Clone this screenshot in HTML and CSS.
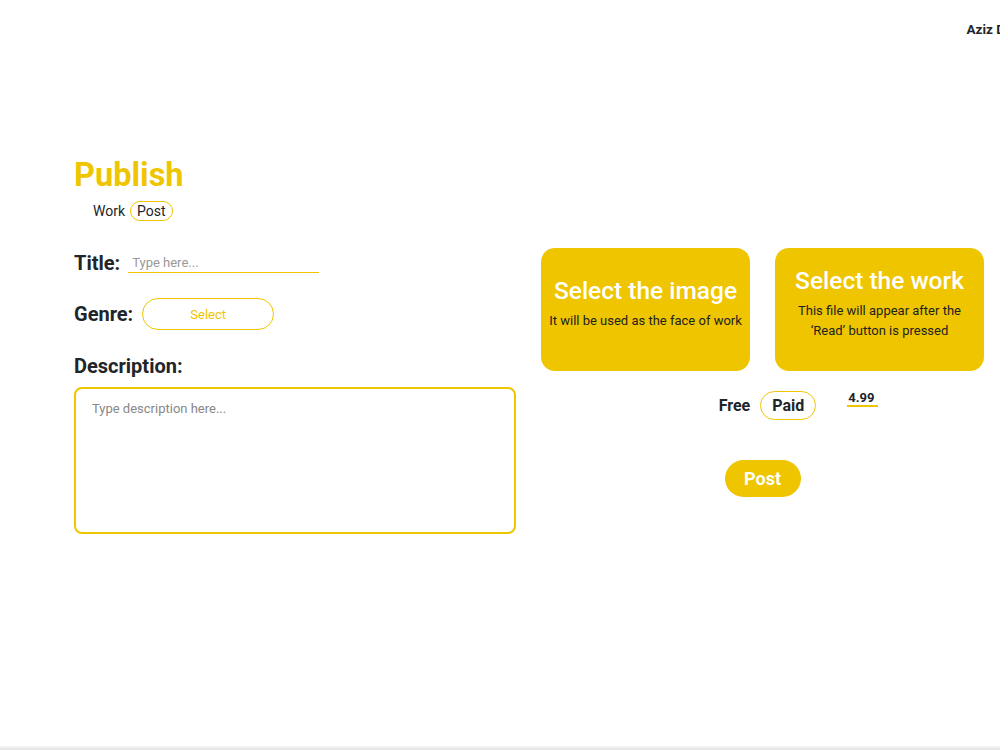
FILE: index.html
```html
<!DOCTYPE html>
<html lang="en">
<head>
  <meta charset="UTF-8" />
  <meta name="viewport" content="width=device-width, initial-scale=1.0"/>
  <title>Publish</title>
  <link rel="stylesheet" href="styles.css">
</head>
<body>
  <div class="page">
    <header class="header">
      <span class="user">Aziz Dzhumaev</span>
    </header>

    <main class="main">
      <h1 class="heading">Publish</h1>
      <div class="tabs">
        <span class="tab">Work</span>
        <span class="tab active">Post</span>
      </div>

      <div class="form-grid">
        <div class="left">
          <div class="row">
            <label class="label" for="title">Title:</label>
            <input class="title-input" id="title" type="text" placeholder="Type here..." />
          </div>
          <div class="row genre-row">
            <span class="label">Genre:</span>
            <button class="select-btn">Select</button>
          </div>
          <div class="label desc-label">Description:</div>
          <textarea class="desc" placeholder="Type description here..."></textarea>
        </div>

        <div class="right">
          <div class="cards">
            <div class="card">
              <div class="card-title">Select the image</div>
              <div class="card-text">It will be used as the face of work</div>
            </div>
            <div class="card">
              <div class="card-title">Select the work</div>
              <div class="card-text">This file will appear after the ‘Read’ button is pressed</div>
            </div>
          </div>

          <div class="price-row">
            <span class="price-opt">Free</span>
            <span class="price-opt active">Paid</span>
            <input class="price" type="text" value="4.99" />
          </div>

          <button class="post-btn">Post</button>
        </div>
      </div>
    </main>

    <div class="bottom-bar"></div>
  </div>
</body>
</html>
```

FILE: styles.css
```css
html, body { margin: 0; overflow-x: hidden; }
body { font-family: Roboto, "Liberation Sans", sans-serif; color: #212529; background: #fff; }

.page { min-height: 100vh; display: flex; flex-direction: column; }

.header { display: flex; justify-content: flex-end; padding-top: 21px; margin-right: -60px; }
.user { font-weight: bold; font-size: 13.5px; line-height: 16px; white-space: nowrap; }

.main { padding: 119px 0 0 74px; }
.heading { margin: 0; font-size: 32.5px; line-height: 38px; font-weight: 700; color: #efc500; }

.tabs { display: flex; align-items: center; gap: 5px; margin: 7px 0 0 19px; font-size: 14px; }
.tab { line-height: 18px; }
.tab.active { border: 1px solid #efc500; border-radius: 10px; padding: 0 6px; }

.form-grid { display: grid; grid-template-columns: 442px 443px; column-gap: 25px; margin-top: 27px; }

.row { display: flex; align-items: center; height: 30px; }
.label { font-size: 20px; font-weight: 700; line-height: 24px; }
.title-input { box-sizing: border-box; margin-left: 8px; width: 191px; border: none; border-bottom: 1px solid #efc500; outline: none;
  font-family: inherit; font-size: 13px; padding: 2px 4px; color: #212529; }
.title-input::placeholder { color: #999; }

.genre-row { height: 32px; margin-top: 20px; }
.select-btn { margin-left: 9px; width: 132px; height: 32px; border: 1px solid #efc500; border-radius: 16px;
  background: #fff; color: #efc500; font-family: inherit; font-size: 13px; }

.desc-label { margin-top: 24px; }
.desc { display: block; box-sizing: border-box; margin-top: 9px; width: 442px; height: 147px; border: 2px solid #efc500;
  border-radius: 8px; padding: 12px 16px; font-family: inherit; font-size: 13px; resize: none; outline: none; }
.desc::placeholder { color: #888; }

.right { display: flex; flex-direction: column; align-items: center; }
.cards { display: flex; gap: 25px; align-self: stretch; }
.card { width: 209px; height: 123px; box-sizing: border-box; padding: 0 6px 13px; background: #efc500; border-radius: 14px;
  display: flex; flex-direction: column; justify-content: center; align-items: center; text-align: center; }
.card-title { color: #fff; font-size: 24.5px; font-weight: 500; line-height: 32px; margin-bottom: 4px; }
.card-text { font-size: 13px; line-height: 20px; color: #222; }

.price-row { display: flex; align-items: center; margin-top: 20px; padding-left: 72px; height: 29px; }
.price-opt { font-size: 16px; font-weight: 700; line-height: 27px; }
.price-opt.active { margin-left: 10px; border: 1px solid #efc500; border-radius: 15px; padding: 0 11px; }
.price { margin-left: 31px; width: 30px; margin-top: -14px; border: none; border-bottom: 2px solid #efc500; outline: none;
  font-family: inherit; font-size: 13px; font-weight: 700; padding: 0 0 0 1px; color: #212529; }

.post-btn { margin-top: 40px; width: 76px; height: 37px; border: none; border-radius: 19px; background: #efc500;
  color: #fff; font-family: inherit; font-size: 18px; font-weight: 700; }

.bottom-bar { margin-top: auto; height: 4px; background: linear-gradient(#f5f5f5, #e4e4e4); }
```
